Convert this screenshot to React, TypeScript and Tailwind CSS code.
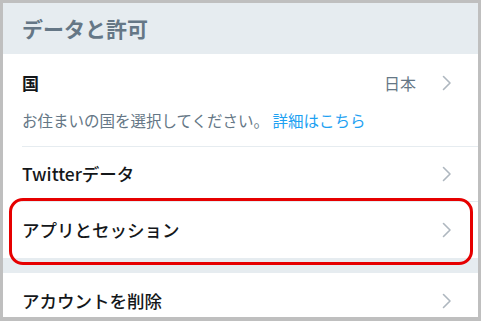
const Chevron = () => (
  <svg width="10" height="16" viewBox="0 0 10 16" fill="none" className="shrink-0">
    <path d="M1.5 1.5 L8 8 L1.5 14.5" stroke="#aeb7bf" strokeWidth="1.6" strokeLinecap="round" strokeLinejoin="round" />
  </svg>
);

export default function App() {
  return (
    <div
      className="w-[481px] h-[321px] overflow-hidden bg-[#bfbfbf] pt-[3px] pl-[3px] pr-[3px]"
      style={{ fontFamily: '"Noto Sans CJK JP", "Noto Sans", sans-serif' }}
    >
      <div className="h-[314px] overflow-hidden bg-[#e6ecf0]">
        {/* section header */}
        <div className="h-[51px] flex items-center pl-[19px] pb-[1px]">
          <h2 className="text-[21px] font-bold text-[#657786] leading-none">データと許可</h2>
        </div>

        <div className="bg-white">
          {/* country */}
          <div className="pl-[19px]">
            <div className="flex items-center h-[58px] pr-[26px]">
              <span className="flex-1 text-[17px] font-bold text-[#14171a]">国</span>
              <span className="mr-[26px] text-[16px] text-[#657786]">日本</span>
              <Chevron />
            </div>
            <div className="h-[35px] text-[15.5px] text-[#657786] leading-none pt-[1px] border-b border-[#e6ecf0]">
              お住まいの国を選択してください。 <span className="text-[#1da1f2]">詳細はこちら</span>
            </div>
          </div>

          <div className="pl-[19px]">
            <div className="flex items-center h-[55px] pr-[26px] border-b border-[#e6ecf0]">
              <span className="flex-1 text-[17.5px] font-medium text-[#14171a]">Twitterデータ</span>
              <Chevron />
            </div>
          </div>

          <div className="relative pl-[19px]">
            <div className="flex items-center h-[56px] pr-[26px]">
              <span className="flex-1 text-[17.5px] font-medium text-[#14171a]">アプリとセッション</span>
              <Chevron />
            </div>
            <div className="absolute left-[6px] right-[5px] -top-[4px] -bottom-[7px] border-[3.5px] border-[#e60000] rounded-[14px] pointer-events-none z-10" />
          </div>
        </div>

        <div className="h-[15px]" />

        <div className="bg-white">
          <div className="flex items-center h-[56px] pl-[19px] pr-[26px]">
            <span className="flex-1 text-[17.5px] font-medium text-[#14171a]">アカウントを削除</span>
            <Chevron />
          </div>
        </div>
      </div>
    </div>
  );
}
